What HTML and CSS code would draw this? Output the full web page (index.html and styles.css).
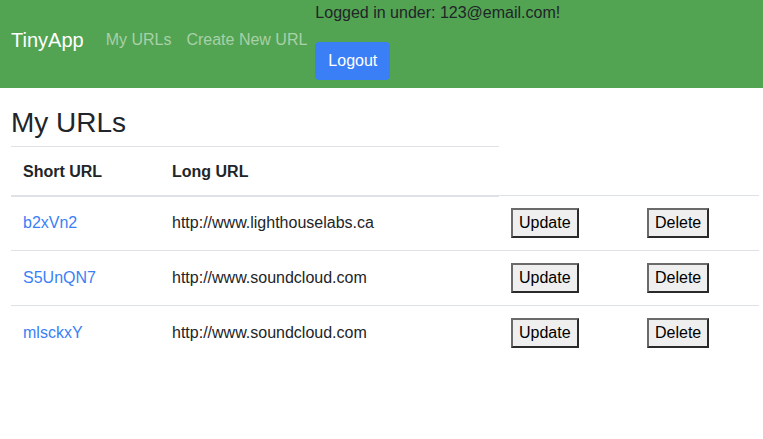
FILE: index.html
```html
<!DOCTYPE html>
<html lang="en">
<head>
<meta charset="utf-8">
<title>TinyApp</title>
<link rel="stylesheet" href="styles.css">
</head>
<body>
<nav class="navbar">
  <a class="brand" href="#">TinyApp</a>
  <div class="nav-links">
    <a class="nav-link" href="#">My URLs</a>
    <a class="nav-link" href="#">Create New URL</a>
  </div>
  <div class="user-box">
    <div class="user-text">Logged in under: 123@email.com!</div>
    <button class="btn-logout">Logout</button>
  </div>
</nav>
<main class="main">
  <h3 class="title">My URLs</h3>
  <table class="url-table">
    <colgroup>
      <col class="c1"><col class="c2"><col class="c3"><col class="c4">
    </colgroup>
    <thead>
      <tr><th>Short URL</th><th>Long URL</th></tr>
    </thead>
    <tbody>
      <tr>
        <td><a class="short" href="#">b2xVn2</a></td>
        <td>http://www.lighthouselabs.ca</td>
        <td><button class="btn">Update</button></td>
        <td><button class="btn">Delete</button></td>
      </tr>
      <tr>
        <td><a class="short" href="#">S5UnQN7</a></td>
        <td>http://www.soundcloud.com</td>
        <td><button class="btn">Update</button></td>
        <td><button class="btn">Delete</button></td>
      </tr>
      <tr>
        <td><a class="short" href="#">mlsckxY</a></td>
        <td>http://www.soundcloud.com</td>
        <td><button class="btn">Update</button></td>
        <td><button class="btn">Delete</button></td>
      </tr>
    </tbody>
  </table>
</main>
</body>
</html>
```
FILE: styles.css
```css
* { box-sizing: border-box; }
html, body { margin: 0; padding: 0; }
body {
  font-family: "Liberation Sans", Arial, sans-serif;
  font-size: 16px;
  line-height: 24px;
  color: #212529;
  background: #fff;
}
.navbar {
  height: 88px;
  background: #52a352;
  display: flex;
  align-items: center;
  padding: 0 11px 8px 11px;
}
.brand {
  color: #fff;
  font-size: 20px;
  line-height: 30px;
  text-decoration: none;
  margin-right: 14px;
}
.nav-links { display: flex; }
.nav-link {
  color: rgba(255, 255, 255, 0.5);
  text-decoration: none;
  padding: 8px 8px;
}
.nav-link + .nav-link { padding-left: 7px; }
.user-box {
  display: flex;
  flex-direction: column;
  align-items: flex-start;
  align-self: flex-start;
  padding-top: 1px;
}
.user-text { color: #212529; margin-bottom: 17px; }
.btn-logout {
  font-family: inherit;
  font-size: 16px;
  line-height: 24px;
  height: 38px;
  padding: 6px 12px;
  color: #fff;
  background: #3b7ff6;
  border: 1px solid #3b7ff6;
  border-radius: 4px;
}
.main { padding: 0 4px 0 11px; }
.title {
  font-size: 28px;
  font-weight: 500;
  line-height: 33.6px;
  margin: 18px 0 6px;
}
.url-table {
  width: 100%;
  table-layout: fixed;
  border-collapse: collapse;
}
.c1 { width: 149px; }
.c2 { width: 339px; }
.c3 { width: 136px; }
.c4 { width: 124px; }
.url-table th, .url-table td {
  padding: 12px;
  text-align: left;
  border-top: 1px solid #dee2e6;
}
.url-table th {
  font-weight: bold;
  vertical-align: top;
  padding-top: 13px;
  padding-bottom: 11px;
  border-bottom: 2px solid #dee2e6;
}
.url-table td { vertical-align: middle; }
.short { color: #3b7ff6; text-decoration: none; }
.btn {
  display: block;
  font-family: inherit;
  font-size: 16px;
  line-height: 20px;
  height: 30px;
  padding: 3px 6px;
  background: #efefef;
  color: #000;
  border: 2px solid;
  border-color: #6a6a6a #2a2a2a #2a2a2a #6a6a6a;
  border-radius: 0;
}
```
